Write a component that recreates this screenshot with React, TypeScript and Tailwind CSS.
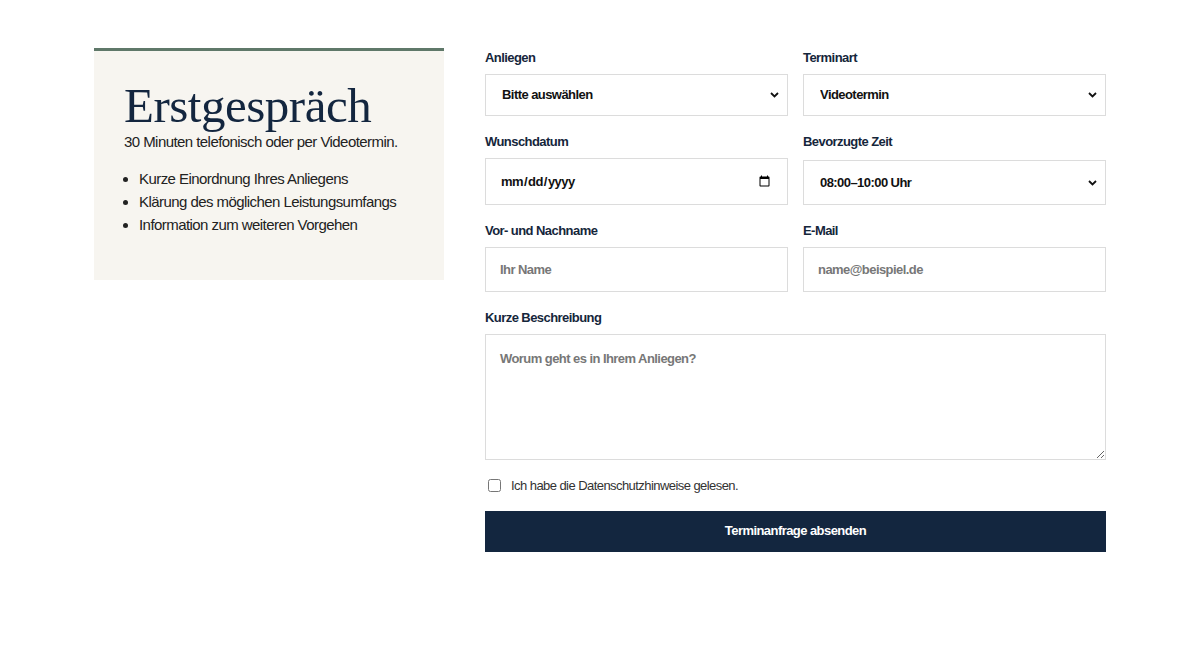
import React from "react";

const sans = { fontFamily: '"Liberation Sans", Arial, sans-serif' };

function Chevron() {
  return (
    <svg
      className="pointer-events-none absolute right-[9px] top-1/2 -translate-y-1/2"
      width="9"
      height="6"
      viewBox="0 0 9 6"
      fill="none"
    >
      <path d="M1 1l3.5 3.5L8 1" stroke="#111" strokeWidth="1.8" />
    </svg>
  );
}

function Label({ children }: { children: React.ReactNode }) {
  return <label className="mb-2 block text-[13px] font-bold leading-4 text-[#15263b]">{children}</label>;
}

function Select({ value, h }: { value: string; h: string }) {
  return (
    <div className="relative">
      <select
        defaultValue={value}
        className={`block w-full appearance-none border border-[#dcdcdc] bg-white pl-4 text-[13px] font-bold text-[#111] outline-none ${h}`}
      >
        <option>{value}</option>
      </select>
      <Chevron />
    </div>
  );
}

export default function App() {
  return (
    <div className="min-h-[649px] bg-white tracking-[-0.035em]" style={sans}>
      <div className="mx-auto flex w-[1012px] gap-[41px] pt-12">
        <aside className="h-[232px] w-[350px] shrink-0 border-t-[3px] border-[#5f7869] bg-[#f7f5f0] px-[30px] pt-[29px]">
          <h1
            className="text-[49px] leading-[52px] tracking-[-0.01em] text-[#13263f]"
            style={{ fontFamily: '"Liberation Serif", Georgia, serif' }}
          >
            Erstgespräch
          </h1>
          <p className="text-[15px] leading-5 text-[#222]">30 Minuten telefonisch oder per Videotermin.</p>
          <ul className="mt-[15px] list-disc pl-[15px] text-[15px] leading-[23px] text-[#222]">
            <li>Kurze Einordnung Ihres Anliegens</li>
            <li>Klärung des möglichen Leistungsumfangs</li>
            <li>Information zum weiteren Vorgehen</li>
          </ul>
        </aside>

        <form className="w-[621px] pt-[2px]">
          <div className="grid grid-cols-2 gap-x-[15px] gap-y-[18px]">
            <div>
              <Label>Anliegen</Label>
              <Select value="Bitte auswählen" h="h-[42px]" />
            </div>
            <div>
              <Label>Terminart</Label>
              <Select value="Videotermin" h="h-[42px]" />
            </div>
            <div>
              <Label>Wunschdatum</Label>
              <input
                type="date"
                className="block h-[47px] w-full border border-[#dcdcdc] bg-white pl-[14px] pr-[14px] text-[13px] font-bold text-[#111] outline-none"
              />
            </div>
            <div>
              <Label>Bevorzugte Zeit</Label>
              <div className="pt-[2px]">
                <Select value="08:00–10:00 Uhr" h="h-[45px]" />
              </div>
            </div>
            <div>
              <Label>Vor- und Nachname</Label>
              <input
                placeholder="Ihr Name"
                className="block h-[45px] w-full border border-[#dcdcdc] bg-white px-[14px] text-[13px] font-bold text-[#111] outline-none placeholder:text-[#777]"
              />
            </div>
            <div>
              <Label>E-Mail</Label>
              <input
                placeholder="name@beispiel.de"
                className="block h-[45px] w-full border border-[#dcdcdc] bg-white px-[14px] text-[13px] font-bold text-[#111] outline-none placeholder:text-[#777]"
              />
            </div>
            <div className="col-span-2">
              <Label>Kurze Beschreibung</Label>
              <textarea
                placeholder="Worum geht es in Ihrem Anliegen?"
                className="block h-[126px] w-full border border-[#dcdcdc] bg-white px-[14px] pt-[14px] text-[13px] font-bold text-[#111] outline-none placeholder:text-[#777]"
              />
            </div>
          </div>

          <label className="mt-[16px] flex items-center gap-[10px] pl-[3px] text-[13px] text-[#333]">
            <input type="checkbox" className="m-0 h-[13px] w-[13px]" />
            Ich habe die Datenschutzhinweise gelesen.
          </label>

          <button
            type="button"
            className="mt-[15px] block h-[41px] w-full bg-[#13263f] text-[13px] font-bold text-white"
          >
            Terminanfrage absenden
          </button>
        </form>
      </div>
    </div>
  );
}
